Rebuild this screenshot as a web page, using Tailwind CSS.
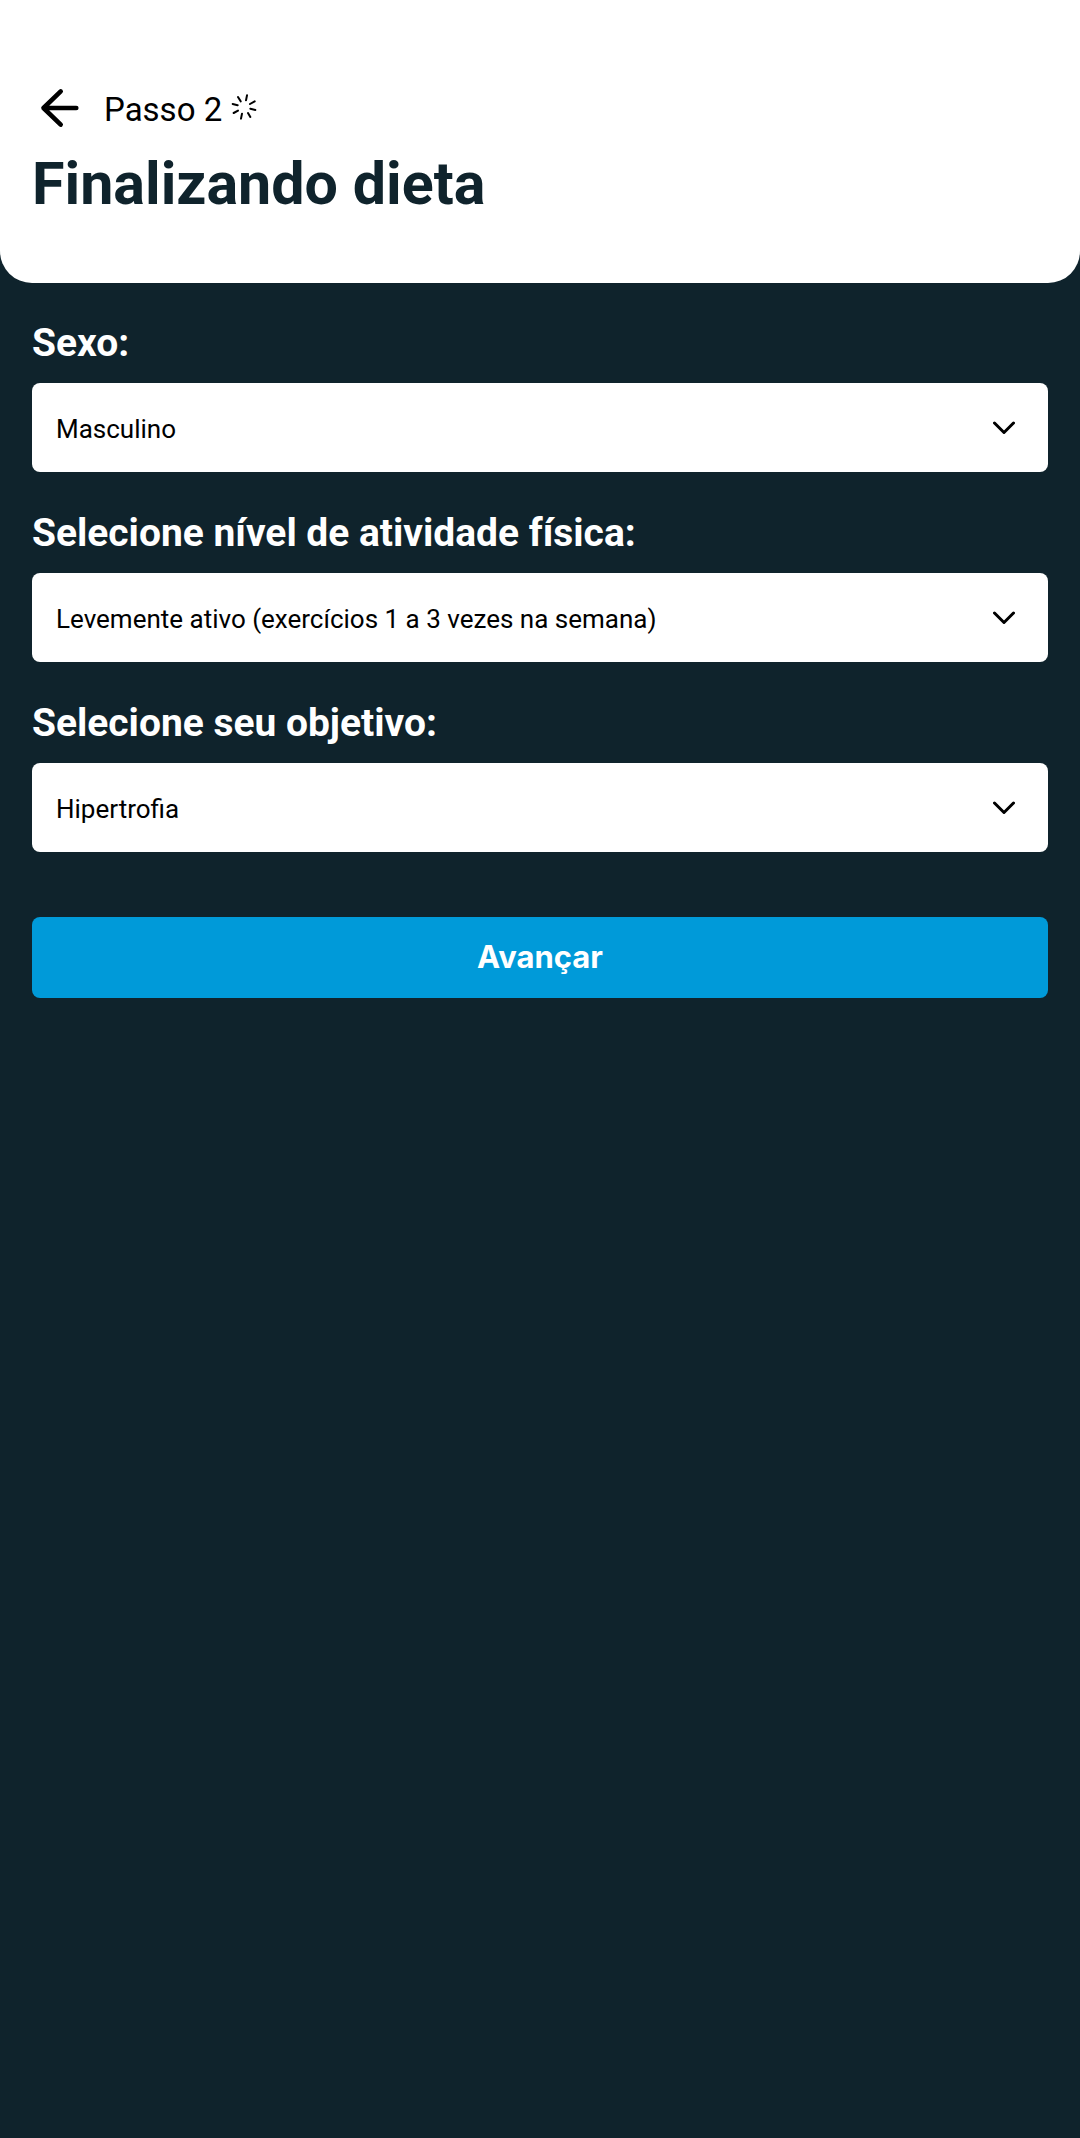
<!DOCTYPE html>
<html lang="pt-BR">
<head>
<meta charset="utf-8">
<title>Finalizando dieta</title>
<script src="https://cdn.jsdelivr.net/npm/@tailwindcss/browser@4"></script>
</head>
<body class="min-h-screen bg-[#0f232c] font-['Roboto',sans-serif]">
  <header class="h-[283px] rounded-b-[32px] bg-white px-8 pt-[88px] text-[#0f232c]">
    <div class="flex h-10 items-center text-black">
      <svg class="ml-2 h-10 w-10" viewBox="0 0 40 40" fill="none" stroke="currentColor" stroke-width="4.6" stroke-linecap="round" stroke-linejoin="round"><path d="M36.3 20H3.5M20.7 3.4L3.5 20l17.2 16.6"/></svg>
      <span class="ml-6 pt-[3px] text-[33px] leading-10 whitespace-nowrap">Passo 2</span>
      <svg class="mb-[3px] ml-[9px] h-[26px] w-[26px]" viewBox="633 70 78 78" fill="none" stroke="currentColor" stroke-width="6" stroke-linecap="round"><path d="M681 74l-3 15M654 79l8 13M638 100l15 4M641 127l13-7M666 129l-3 15M684 127l7 12M691 114l15 4M690 100l14-8"/></svg>
    </div>
    <h1 class="mt-[26px] text-[59.2px] leading-[60px] font-bold">Finalizando dieta</h1>
  </header>
  <main class="flex flex-col gap-10 px-8 pt-10">
    <section>
      <h2 class="mb-5 text-[38.95px] leading-10 font-bold text-white">Sexo:</h2>
      <div class="flex h-[89px] items-center justify-between rounded-lg bg-white pr-[33px] pl-6">
        <span class="pt-[3px] text-[26px] leading-8 text-black">Masculino</span>
        <svg class="h-[22px] w-[22px]" viewBox="0 0 22 22" fill="none" stroke="#000" stroke-width="3" stroke-linecap="round" stroke-linejoin="round"><path d="M1.5 6L11 15.5 20.5 6"/></svg>
      </div>
    </section>
    <section>
      <h2 class="mt-px mb-5 text-[38.95px] leading-10 font-bold text-white">Selecione nível de atividade física:</h2>
      <div class="flex h-[89px] items-center justify-between rounded-lg bg-white pr-[33px] pl-6">
        <span class="pt-[3px] text-[26px] leading-8 text-black">Levemente ativo (exercícios 1 a 3 vezes na semana)</span>
        <svg class="h-[22px] w-[22px]" viewBox="0 0 22 22" fill="none" stroke="#000" stroke-width="3" stroke-linecap="round" stroke-linejoin="round"><path d="M1.5 6L11 15.5 20.5 6"/></svg>
      </div>
    </section>
    <section>
      <h2 class="mt-px mb-5 text-[38.95px] leading-10 font-bold text-white">Selecione seu objetivo:</h2>
      <div class="flex h-[89px] items-center justify-between rounded-lg bg-white pr-[33px] pl-6">
        <span class="pt-[3px] text-[26px] leading-8 text-black">Hipertrofia</span>
        <svg class="h-[22px] w-[22px]" viewBox="0 0 22 22" fill="none" stroke="#000" stroke-width="3" stroke-linecap="round" stroke-linejoin="round"><path d="M1.5 6L11 15.5 20.5 6"/></svg>
      </div>
    </section>
    <button class="mt-[25px] h-[81px] rounded-lg bg-[#009ad9] pb-0.5 font-['Inter',sans-serif] text-[31px] leading-10 font-bold text-white">Avançar</button>
  </main>
</body>
</html>
